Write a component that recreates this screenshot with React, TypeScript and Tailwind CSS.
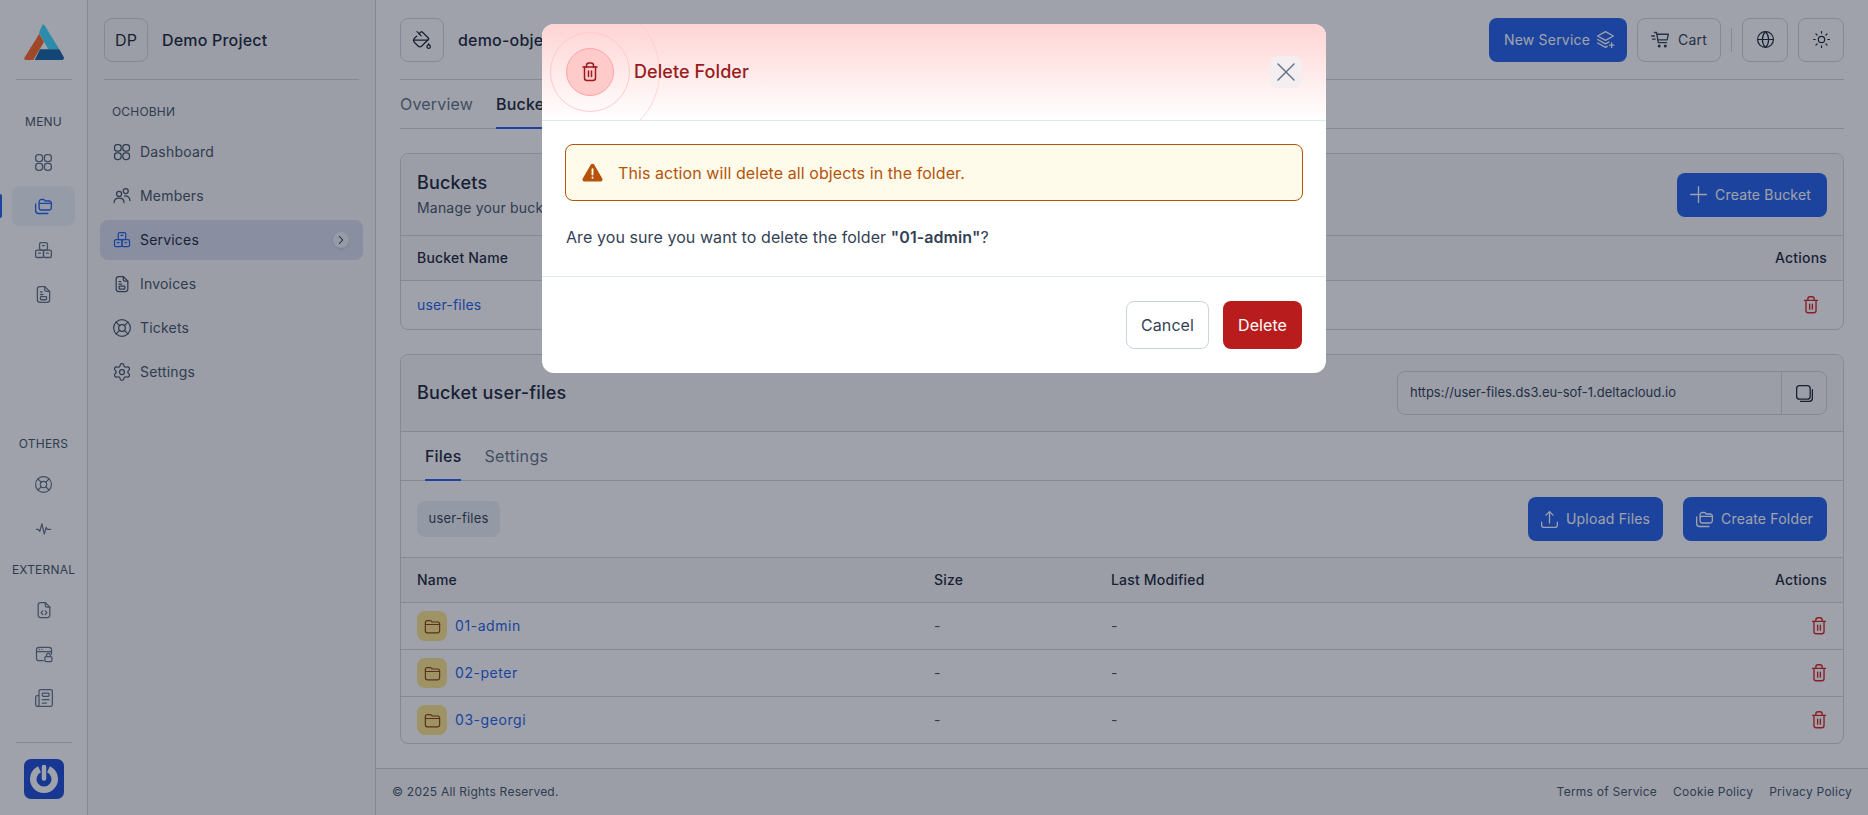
import { ChevronRight, Globe, LifeBuoy, Newspaper, PaintBucket, Settings, Sun, X } from "lucide-react"
import type { ReactNode } from "react"

type IconProps = { className?: string; strokeWidth?: number }

function Svg({ className, children }: IconProps & { children: ReactNode }) {
  return (
    <svg viewBox="0 0 24 24" fill="none" stroke="currentColor" strokeWidth="1.5" strokeLinecap="round" strokeLinejoin="round" className={className}>
      {children}
    </svg>
  )
}

const GridIcon = ({ className }: IconProps) => (
  <Svg className={className}>
    <rect x="3" y="3" width="8" height="8" rx="3.2" />
    <rect x="13" y="3" width="8" height="8" rx="3.2" />
    <rect x="3" y="13" width="8" height="8" rx="3.2" />
    <rect x="13" y="13" width="8" height="8" rx="3.2" />
  </Svg>
)

const UsersIcon = ({ className }: IconProps) => (
  <Svg className={className}>
    <circle cx="8.5" cy="9.5" r="3" />
    <circle cx="16.5" cy="6" r="3" />
    <path d="M2.5 20c0-3.5 2.5-5.5 6-5.5s6 2 6 5.5" />
    <path d="M15 12c3.8-.4 6.5 1.8 6.5 5.5" />
  </Svg>
)

const FoldersIcon = ({ className }: IconProps) => (
  <Svg className={className}>
    <path d="M7 6.5A2.5 2.5 0 0 1 9.5 4h2.2a2 2 0 0 1 1.5.7l.8 1h4.5A2.5 2.5 0 0 1 21 8.2v5.3a2.5 2.5 0 0 1-2.5 2.5h-9A2.5 2.5 0 0 1 7 13.5z" />
    <path d="M7 8.5h14" />
    <path d="M3 9v7.5A3.5 3.5 0 0 0 6.5 20H17" />
  </Svg>
)

const BoxesIcon = ({ className }: IconProps) => (
  <Svg className={className}>
    <rect x="7.5" y="3" width="9" height="8.5" rx="1.8" />
    <rect x="3" y="11.5" width="9" height="8.5" rx="1.8" />
    <rect x="12" y="11.5" width="9" height="8.5" rx="1.8" />
    <path d="M11 6.5h2M6.5 15h2M15.500 15h2" />
  </Svg>
)

const InvoiceIcon = ({ className }: IconProps) => (
  <Svg className={className}>
    <path d="M13.5 3H8a3 3 0 0 0-3 3v12a3 3 0 0 0 3 3h8a3 3 0 0 0 3-3V8.5z" />
    <path d="M13.5 3v3.5a2 2 0 0 0 2 2H19" />
    <path d="M8.5 9h2M8.5 12h3" />
    <rect x="8.5" y="14.5" width="7" height="3.5" rx="0.8" />
  </Svg>
)

const PulseIcon = ({ className }: IconProps) => (
  <Svg className={className}>
    <path d="M3 13h2.3l2 2.500 2.700-9.500 3 13 2.400-8.500 1.200 2.500h4.400" />
  </Svg>
)

const CodeFileIcon = ({ className }: IconProps) => (
  <Svg className={className}>
    <path d="M13.5 3H8a3 3 0 0 0-3 3v12a3 3 0 0 0 3 3h8a3 3 0 0 0 3-3V8.5z" />
    <path d="M13.5 3v3.5a2 2 0 0 0 2 2H19" />
    <path d="M10.5 13l-2 2.2 2 2.2M13.5 13l2 2.2-2 2.2" />
  </Svg>
)

const BrowserLockIcon = ({ className }: IconProps) => (
  <Svg className={className}>
    <path d="M11 20H6a3 3 0 0 1-3-3V7a3 3 0 0 1 3-3h12a3 3 0 0 1 3 3v5" />
    <path d="M3 9h18" />
    <path d="M6.5 6.5h.01M9.5 6.5h.01" />
    <rect x="13" y="15" width="8.5" height="6" rx="1.5" />
    <path d="M15 15v-1.5a2.2 2.2 0 0 1 4.500 0V15" />
  </Svg>
)

const UploadIcon = ({ className }: IconProps) => (
  <Svg className={className}>
    <path d="M12 16V3.5M8 7l4-4 4 4" />
    <path d="M3 15v3.500A2.500 2.500 0 0 0 5.500 21h13a2.500 2.500 0 0 0 2.500-2.500V15" />
  </Svg>
)

const LayersPlusIcon = ({ className }: IconProps) => (
  <Svg className={className}>
    <path d="M12 3l9 5-9 5-9-5z" />
    <path d="M3 12l9 5 4-2.2" />
    <path d="M3 16l9 5 2-1.1" />
    <path d="M19 16v5M16.5 18.5h5" />
  </Svg>
)

const PlusIcon = ({ className }: IconProps) => (
  <Svg className={className}>
    <path d="M12 3v18M3 12h18" />
  </Svg>
)

const CartIcon = ({ className }: IconProps) => (
  <Svg className={className}>
    <path d="M5 4h2.5l2 11.5H19" />
    <path d="M7.8 6H21l-1.5 6.5H9" />
    <path d="M2 8h3M3 11.5h3" />
    <circle cx="10.5" cy="19.5" r="1" fill="currentColor" />
    <circle cx="17.5" cy="19.5" r="1" fill="currentColor" />
  </Svg>
)

const CopySquareIcon = ({ className }: IconProps) => (
  <Svg className={className}>
    <rect x="3" y="3" width="15.5" height="15.5" rx="3.5" />
    <path d="M21 7.5v10a3.500 3.500 0 0 1-3.500 3.500h-10" />
  </Svg>
)

const TrashIcon = ({ className }: IconProps) => (
  <Svg className={className}>
    <path d="M5 7h14" />
    <path d="M8.5 7V5.500A2.500 2.500 0 0 1 11 3h2a2.500 2.500 0 0 1 2.500 2.500V7" />
    <path d="M6.5 7v11a2.500 2.500 0 0 0 2.500 2.500h6a2.500 2.500 0 0 0 2.500-2.500V7" />
    <path d="M10.5 11v5.5M13.5 11v5.5" />
  </Svg>
)

const FolderIcon = ({ className }: IconProps) => (
  <Svg className={className}>
    <path d="M3 7a2.500 2.500 0 0 1 2.500-2.500h3.600a2 2 0 0 1 1.500.7l1 1.100h6.900A2.500 2.500 0 0 1 21 8.800v8.700a2.500 2.500 0 0 1-2.500 2.500h-13A2.500 2.500 0 0 1 3 17.500z" />
    <path d="M3 9.5h18" />
  </Svg>
)

const Logo = () => (
  <svg viewBox="0 0 40 36" className="h-9 w-10">
    <path d="M15.3 9.7 .4 33.8A1.5 1.5 0 0 0 1.700 36h7.600L20 18z" fill="#ff6a28" />
    <path d="M15 8.6 18.3 1a1.2 1.2 0 0 1 2.100 0L35.300 25.300H24.300z" fill="#3fdcff" />
    <path d="M16 25.3h19.300L39.700 33a2 2 0 0 1-1.700 3H10.700z" fill="#1664a7" />
  </svg>
)

const PowerLogo = () => (
  <svg viewBox="0 0 40 40" className="h-10 w-10">
    <rect width="40" height="40" rx="7" fill="#1d4ed8" />
    <path d="M15.5 10.3A10.75 10.75 0 1 0 24.5 10.3" fill="none" stroke="#fff" strokeWidth="6.5" />
    <path d="M20 8v11.5" stroke="#fff" strokeWidth="4.5" strokeLinecap="round" />
  </svg>
)

const railMenu = [GridIcon, FoldersIcon, BoxesIcon, InvoiceIcon]
const railOthers = [LifeBuoy, PulseIcon]
const railExternal = [CodeFileIcon, BrowserLockIcon, Newspaper]

const navigation = [
  { name: "Dashboard", icon: GridIcon },
  { name: "Members", icon: UsersIcon },
  { name: "Services", icon: BoxesIcon },
  { name: "Invoices", icon: InvoiceIcon },
  { name: "Tickets", icon: LifeBuoy },
  { name: "Settings", icon: Settings },
]

const folders = ["01-admin", "02-peter", "03-georgi"]

function Rail() {
  return (
    <aside className="flex w-[88px] shrink-0 flex-col items-center border-r border-[#d1d5e0] bg-white">
      <div className="flex h-[80px] w-[56px] shrink-0 items-center justify-center border-b border-[#d1d5e0] pt-1">
        <Logo />
      </div>
      <div className="mt-[33px] text-xs leading-[18px] text-[#475569]">MENU</div>
      <div className="mt-[11px] flex flex-col items-center gap-1">
        {railMenu.map((Icon, i) => (
          <div key={i} className={`flex h-10 w-[63px] items-center justify-center rounded-lg ${i === 1 ? "bg-[#eff3fb] text-[#2563eb]" : "text-[#64748b]"}`}>
            <Icon className="h-[21px] w-[21px]" />
          </div>
        ))}
      </div>
      <div className="mt-[121px] text-xs leading-[18px] text-[#475569]">OTHERS</div>
      <div className="mt-[11px] flex flex-col items-center gap-1 text-[#64748b]">
        {railOthers.map((Icon, i) => (
          <div key={i} className="flex h-10 w-[63px] items-center justify-center">
            <Icon className="h-[19px] w-[19px]" strokeWidth={1.5} />
          </div>
        ))}
      </div>
      <div className="mt-[13px] text-xs leading-[18px] text-[#475569]">EXTERNAL</div>
      <div className="mt-[11px] flex flex-col items-center gap-1 text-[#64748b]">
        {railExternal.map((Icon, i) => (
          <div key={i} className="flex h-10 w-[63px] items-center justify-center">
            <Icon className="h-[20px] w-[20px]" strokeWidth={1.5} />
          </div>
        ))}
      </div>
      <div className="mt-6 flex w-[56px] justify-center border-t border-[#d1d5e0] pt-4">
        <PowerLogo />
      </div>
    </aside>
  )
}

function Sidebar() {
  return (
    <aside className="flex w-[288px] shrink-0 flex-col border-r border-[#d1d5e0] bg-[#f8f9fb] px-3">
      <div className="mx-1 flex h-[80px] shrink-0 items-center gap-[14px] border-b border-[#d1d5e0]">
        <div className="flex h-[44px] w-[44px] items-center justify-center rounded-lg border border-[#d1d5e0] text-base text-[#1f2937]">DP</div>
        <div className="text-base font-medium text-[#1e293b]">Demo Project</div>
      </div>
      <div className="mt-6 px-3 text-xs leading-[16px] text-[#475569]">ОСНОВНИ</div>
      <nav className="mt-3 flex flex-col gap-1">
        {navigation.map((item) => {
          const active = item.name === "Services"
          return (
            <div key={item.name} className={`flex h-10 items-center gap-2 rounded-lg px-3 text-sm ${active ? "bg-[#dae0ef] text-[#1e293b]" : "text-[#475569]"}`}>
              <item.icon className={`h-5 w-5 ${active ? "text-[#2563eb]" : "text-[#475569]"}`} strokeWidth={1.5} />
              <span className="flex-1">{item.name}</span>
              {active && (
                <span className="mr-0.5 flex h-4 w-4 items-center justify-center rounded-full bg-[#f1f3f7] text-[#1e293b] shadow-sm">
                  <ChevronRight className="h-[14px] w-[14px]" strokeWidth={1.75} />
                </span>
              )}
            </div>
          )
        })}
      </nav>
    </aside>
  )
}

function BlueButton({ icon, width, children }: { icon: ReactNode; width: string; children: ReactNode }) {
  return (
    <button className={`flex h-[44px] items-center gap-[6px] rounded-lg bg-[#2563eb] pl-[11px] text-sm text-white ${width}`}>
      {icon}
      {children}
    </button>
  )
}

function SquareButton({ children }: { children: ReactNode }) {
  return <button className="flex h-[44px] w-[46px] items-center justify-center rounded-lg border border-[#d1d5e0] text-[#1f2937]">{children}</button>
}

function Header() {
  return (
    <header className="mx-6 flex h-[80px] shrink-0 items-center justify-between border-b border-[#d1d5e0]">
      <div className="flex items-center gap-[14px]">
        <button className="flex h-[44px] w-[44px] items-center justify-center rounded-lg border border-[#d1d5e0] text-[#1f2937]">
          <PaintBucket className="h-5 w-5" strokeWidth={1.5} />
        </button>
        <span className="text-base font-medium text-[#1e293b]">demo-object-storage</span>
      </div>
      <div className="flex items-center">
        <button className="flex h-[44px] w-[138px] items-center justify-between rounded-lg bg-[#2563eb] pl-[15px] pr-[11px] text-sm text-white">
          New Service
          <LayersPlusIcon className="h-[21px] w-[21px]" />
        </button>
        <button className="ml-[10px] flex h-[44px] w-[84px] items-center gap-[7px] rounded-lg border border-[#d1d5e0] pl-3 text-sm text-[#334155]">
          <CartIcon className="h-[21px] w-[21px]" />
          Cart
        </button>
        <div className="mx-[10px] h-6 w-px bg-[#d1d5e0]" />
        <SquareButton>
          <Globe className="h-[19px] w-[19px]" strokeWidth={1.5} />
        </SquareButton>
        <div className="ml-[10px]">
          <SquareButton>
            <Sun className="h-[19px] w-[19px]" strokeWidth={1.5} />
          </SquareButton>
        </div>
      </div>
    </header>
  )
}

function Tabs() {
  return (
    <div className="mx-6 flex h-[49px] shrink-0 items-stretch gap-[23px] border-b border-[#d1d5e0] text-base">
      <div className="flex items-center text-[#64748b]">Overview</div>
      <div className="-mb-px flex items-center border-b-2 border-[#2563eb] pr-2 font-medium text-[#1e293b]">Buckets</div>
    </div>
  )
}

function BucketsCard() {
  return (
    <section className="overflow-hidden rounded-lg border border-[#d1d5e0]">
      <div className="flex h-[82px] items-center justify-between border-b border-[#d1d5e0] bg-[#f8f9fb] px-4">
        <div>
          <h2 className="text-lg font-medium leading-[24px] text-[#1e293b]">Buckets</h2>
          <p className="mt-[3px] text-sm leading-5 text-[#475569]">Manage your buckets and their settings</p>
        </div>
        <BlueButton width="w-[150px]" icon={<PlusIcon className="h-[21px] w-[21px]" />}>Create Bucket</BlueButton>
      </div>
      <div className="flex h-[45px] items-center justify-between border-b border-[#d1d5e0] bg-[#f8f9fb] px-4 text-sm font-medium text-[#1e293b]">
        <span>Bucket Name</span>
        <span>Actions</span>
      </div>
      <div className="flex h-[48px] items-center justify-between px-4 text-sm">
        <span className="text-[#2563eb]">user-files</span>
        <TrashIcon className="mr-[5px] h-[22px] w-[22px] text-[#dc2626]" />
      </div>
    </section>
  )
}

function FilesCard() {
  return (
    <section className="overflow-hidden rounded-lg border border-[#d1d5e0]">
      <div className="flex h-[77px] items-center justify-between border-b border-[#d1d5e0] bg-[#f8f9fb] px-4">
        <h2 className="text-lg font-medium text-[#1e293b]">Bucket user-files</h2>
        <div className="flex h-[44px] w-[430px] items-center rounded-lg border border-[#d1d5e0] pl-3 text-[13px] tracking-normal text-[#334155]">
          <span className="flex-1">https://user-files.ds3.eu-sof-1.deltacloud.io</span>
          <div className="flex h-full w-[45px] items-center justify-center border-l border-[#d1d5e0]">
            <CopySquareIcon className="h-[21px] w-[21px] text-[#1f2937]" />
          </div>
        </div>
      </div>
      <div className="flex h-[49px] gap-[23px] border-b border-[#d1d5e0] px-6 text-base">
        <div className="-mb-px flex items-center border-b-2 border-[#2563eb] font-medium text-[#1e293b]">Files</div>
        <div className="flex items-center tracking-[0.02em] text-[#64748b]">Settings</div>
      </div>
      <div className="flex h-[77px] items-center justify-between border-b border-[#d1d5e0] px-4">
        <div className="flex h-9 w-[83px] items-center justify-center rounded-lg bg-[#edf2f7] text-[13px] text-[#334155]">user-files</div>
        <div className="flex gap-5">
          <BlueButton width="w-[135px]" icon={<UploadIcon className="h-[21px] w-[21px]" />}>Upload Files</BlueButton>
          <BlueButton width="w-[144px]" icon={<FoldersIcon className="h-[21px] w-[21px]" />}>Create Folder</BlueButton>
        </div>
      </div>
      <div className="grid h-[45px] grid-cols-[517px_177px_1fr_auto] items-center border-b border-[#d1d5e0] bg-[#f8f9fb] px-4 text-sm font-medium text-[#1e293b]">
        <span>Name</span>
        <span>Size</span>
        <span>Last Modified</span>
        <span>Actions</span>
      </div>
      {folders.map((name, i) => (
        <div key={name} className={`grid grid-cols-[517px_177px_1fr_auto] items-center px-4 text-sm ${i < 2 ? "h-[47px] border-b border-[#d1d5e0]" : "h-[46px]"}`}>
          <div className="flex items-center gap-2">
            <div className="flex h-[30px] w-[30px] items-center justify-center rounded-lg bg-[#fde68a] text-[#92400e]">
              <FolderIcon className="h-[19px] w-[19px]" />
            </div>
            <span className="tracking-[0.04em] text-[#2563eb]">{name}</span>
          </div>
          <span className="text-[#475569]">-</span>
          <span className="text-[#475569]">-</span>
          <TrashIcon className="-mr-[3px] h-[22px] w-[22px] justify-self-end text-[#dc2626]" />
        </div>
      ))}
    </section>
  )
}

function Footer() {
  return (
    <footer className="flex h-[47px] shrink-0 items-center justify-between border-t border-[#d1d5e0] bg-[#f8f9fb] px-4 text-xs tracking-[0.02em] text-[#475569]">
      <span>© 2025 All Rights Reserved.</span>
      <div className="flex gap-4">
        <span>Terms of Service</span>
        <span>Cookie Policy</span>
        <span>Privacy Policy</span>
      </div>
    </footer>
  )
}

function DeleteModal() {
  return (
    <div className="fixed inset-0 flex items-start justify-center bg-[#0f172a]/40 pt-6">
      <div className="w-[784px] overflow-hidden rounded-xl bg-white tracking-[0.005em]">
        <div className="relative flex h-[97px] items-center overflow-hidden border-b border-[#e2e8f0] bg-gradient-to-b from-[#fed4d4] to-white px-6">
          <div className="absolute left-[-22px] top-[-22px] h-[140px] w-[140px] rounded-full border border-[#fecaca]/70" />
          <div className="absolute left-[8px] top-[8px] h-[80px] w-[80px] rounded-full border border-[#fecaca]" />
          <div className="relative flex h-12 w-12 items-center justify-center rounded-full border border-[#fca5a5] bg-[#fecaca] text-[#991b1b]">
            <TrashIcon className="h-6 w-6" />
          </div>
          <h3 className="relative ml-5 text-lg font-medium text-[#991b1b]">Delete Folder</h3>
          <button className="relative ml-auto flex h-8 w-8 items-center justify-center rounded-lg bg-[#f5eef0] text-[#64748b]">
            <X className="h-8 w-8" strokeWidth={1.1} />
          </button>
        </div>
        <div className="border-b border-[#e2e8f0] px-[23px] pb-[27px] pt-[23px]">
          <div className="flex h-[57px] items-center gap-[14px] rounded-lg border border-[#b45309] bg-[#fffbeb] px-[15px] text-base text-[#b45309]">
            <svg viewBox="0 0 24 24" className="h-[23px] w-[23px]" fill="currentColor">
              <path d="M10.3 3.7 1.8 18.3A2 2 0 0 0 3.5 21.3h17a2 2 0 0 0 1.700-3L13.7 3.7a2 2 0 0 0-3.400 0z" />
              <path d="M12 8.5v5.5M12 17.2v.3" stroke="#fffbeb" strokeWidth="2" strokeLinecap="round" />
            </svg>
            This action will delete all objects in the folder.
          </div>
          <p className="mt-6 pl-px text-base leading-6 text-[#334155]">
            Are you sure you want to delete the folder <span className="font-semibold">"01-admin"</span>?
          </p>
        </div>
        <div className="flex h-[96px] items-center justify-end gap-[14px] px-6">
          <button className="h-12 w-[83px] rounded-lg border border-[#cbd5e1] text-base text-[#334155]">Cancel</button>
          <button className="h-12 w-[79px] rounded-lg bg-[#b91c1c] text-base text-white">Delete</button>
        </div>
      </div>
    </div>
  )
}

export default function App() {
  return (
    <div className="relative flex h-screen overflow-hidden bg-white tracking-[0.012em] [font-family:Inter,sans-serif]">
      <Rail />
      <Sidebar />
      <main className="flex min-w-0 flex-1 flex-col">
        <Header />
        <Tabs />
        <div className="flex flex-1 flex-col gap-6 px-6 pt-6">
          <BucketsCard />
          <FilesCard />
        </div>
        <Footer />
      </main>
      <div className="absolute left-0 top-[194px] h-6 w-0.5 rounded-r bg-[#2563eb]" />
      <DeleteModal />
    </div>
  )
}
